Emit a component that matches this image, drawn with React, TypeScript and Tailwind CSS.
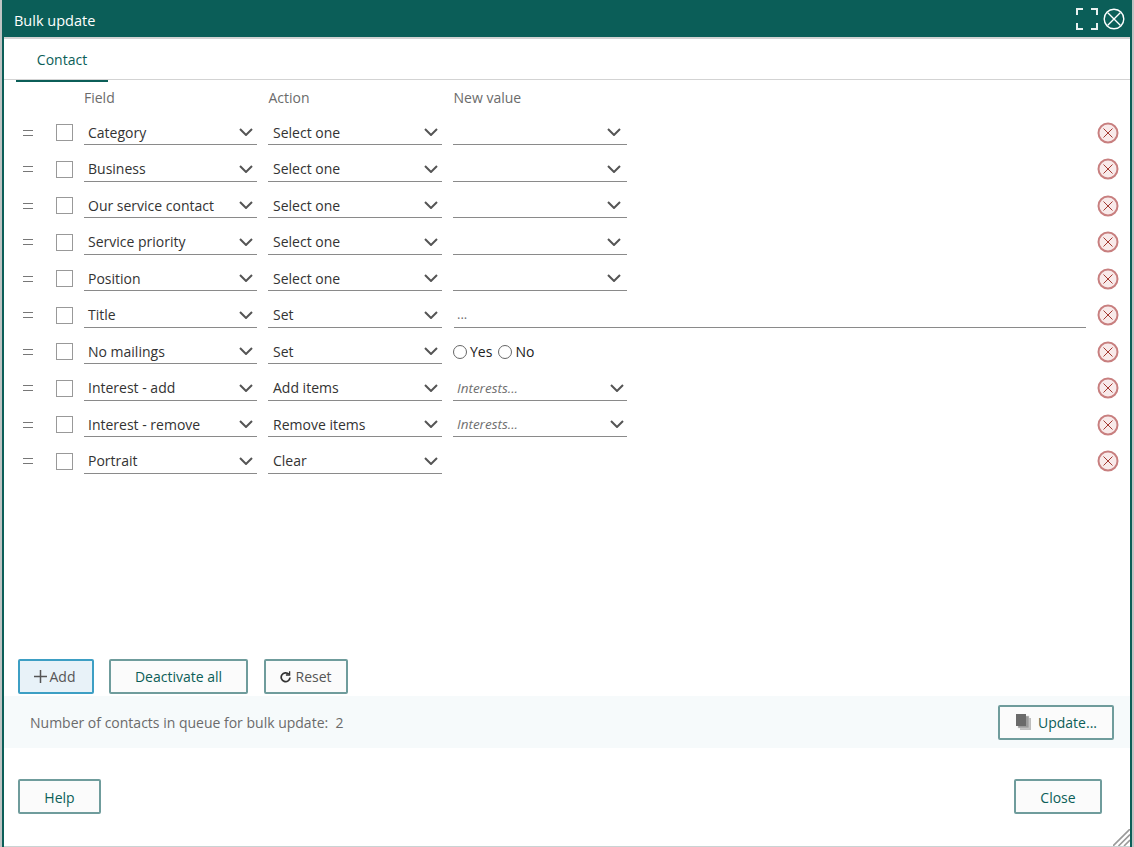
const rows = [
  { field: "Category", action: "Select one", kind: "select" },
  { field: "Business", action: "Select one", kind: "select" },
  { field: "Our service contact", action: "Select one", kind: "select" },
  { field: "Service priority", action: "Select one", kind: "select" },
  { field: "Position", action: "Select one", kind: "select" },
  { field: "Title", action: "Set", kind: "text" },
  { field: "No mailings", action: "Set", kind: "radio" },
  { field: "Interest - add", action: "Add items", kind: "interests" },
  { field: "Interest - remove", action: "Remove items", kind: "interests" },
  { field: "Portrait", action: "Clear", kind: "none" },
];

const btn =
  "h-[35px] flex items-center justify-center rounded-[2px] border-2 border-[#6f9c9c] bg-[#fbfbfb] text-[#0b5e58] text-[14px]";

function Chevron() {
  return (
    <svg width="14" height="8" viewBox="0 0 14 8" fill="none" stroke="#555" strokeWidth="2" className="shrink-0">
      <path d="M1 1l6 6 6-6" />
    </svg>
  );
}

function Select({ label, className = "", italic = false }: { label?: string; className?: string; italic?: boolean }) {
  return (
    <div className={`h-[25px] flex items-center justify-between border-b border-[#8a8a8a] ${className}`}>
      <span className={italic ? "italic text-[#707070] text-[13.5px]" : "text-[#333] text-[14px]"}>{label}</span>
      <Chevron />
    </div>
  );
}

function RemoveIcon() {
  return (
    <svg width="22" height="22" viewBox="0 0 22 22" className="block">
      <circle cx="11" cy="11" r="9.5" fill="#f8eaea" stroke="#c87f7f" strokeWidth="2" />
      <path d="M6.5 6.5l9 9M15.5 6.5l-9 9" stroke="#a33a32" strokeWidth="1" />
    </svg>
  );
}

function Radio({ label }: { label: string }) {
  return (
    <span className="flex items-center gap-[3px]">
      <span className="w-[14px] h-[14px] rounded-full border border-[#666] bg-white" />
      <span className="text-[14px] text-[#222]">{label}</span>
    </span>
  );
}

export default function App() {
  return (
    <div className="w-[1134px] h-[847px] px-[2px] bg-[#bfc4c4]" style={{ fontFamily: "'Open Sans', 'Noto Sans', sans-serif" }}>
      <div className="relative h-full flex flex-col bg-white border-x-2 border-[#0b5e58] overflow-hidden">
        {/* Title bar */}
        <div className="h-[37px] shrink-0 pl-[10px] pr-[5px] bg-[#0b5e58] flex items-center justify-between text-white">
          <span className="text-[14.5px] pt-[5px]">Bulk update</span>
          <div className="flex items-center gap-[5px]">
            <svg width="22" height="22" viewBox="0 0 22 22" fill="none" stroke="#e8f0ef" strokeWidth="2">
              <path d="M1 7V1h6M15 1h6v6M21 15v6h-6M7 21H1v-6" />
            </svg>
            <svg width="22" height="22" viewBox="0 0 22 22" fill="none" stroke="#fff" strokeWidth="1.4">
              <circle cx="11" cy="11" r="9.8" />
              <path d="M4.5 4.5l13 13M17.5 4.5l-13 13" />
            </svg>
          </div>
        </div>

        {/* Tabs */}
        <div className="h-[43px] shrink-0 border-t-2 border-b border-[#d3d3d3] px-[12px] flex items-end">
          <div className="w-[92px] h-[34px] border-b-2 border-[#0b5e58] -mb-[4px] flex items-start justify-center pt-[1px] text-[14px] text-[#0b5e58] relative top-[-1px]">
            Contact
          </div>
        </div>

        {/* Column headers */}
        <div className="h-[34.5px] shrink-0 flex items-center text-[14px] text-[#6b6b6b]">
          <span className="ml-[80px] w-[184.5px]">Field</span>
          <span className="w-[185px]">Action</span>
          <span>New value</span>
        </div>

        {/* Rows */}
        <div className="flex-1 flex flex-col">
          {rows.map((r) => (
            <div key={r.field} className="h-[36.5px] shrink-0 flex items-center">
              <span className="w-[52px] pl-[19px] flex">
                <span className="w-[10px] h-[6px] border-y border-[#777]" />
              </span>
              <span className="w-[17px] h-[17px] border border-[#999] bg-white" />
              <Select label={r.field} className="ml-[11px] w-[173px] pl-[4px] pr-[4px]" />
              <Select label={r.action} className="ml-[11px] w-[174px] pl-[5px] pr-[4px]" />
              <div className="ml-[11px] w-[633px]">
                {r.kind === "select" && <Select className="w-[174px] pl-[5px] pr-[6px]" />}
                {r.kind === "interests" && <Select label="Interests..." italic className="w-[174px] pl-[4px] pr-[3px]" />}
                {r.kind === "text" && (
                  <div className="h-[25px] ml-[1px] border-b border-[#8a8a8a] pl-[3px] text-[13px] text-[#707070] leading-[22px]">
                    ...
                  </div>
                )}
                {r.kind === "radio" && (
                  <div className="flex items-center gap-[6px]">
                    <Radio label="Yes" />
                    <Radio label="No" />
                  </div>
                )}
              </div>
              <span className="ml-[11px]">
                <RemoveIcon />
              </span>
            </div>
          ))}
        </div>

        {/* Actions */}
        <div className="shrink-0 flex items-center pl-[14px] mb-[2px]">
          <button className="h-[35px] w-[76px] flex items-center justify-center gap-[3px] pr-[3px] rounded-[2px] border-2 border-[#3d9fc4] bg-[#e8f2f8] text-[14px] text-[#555]">
            <svg width="13" height="13" viewBox="0 0 13 13" stroke="#555" strokeWidth="1.5">
              <path d="M6.5 0v13M0 6.5h13" />
            </svg>
            Add
          </button>
          <button className={`${btn} w-[139px] ml-[15px]`}>Deactivate all</button>
          <button className={`${btn} w-[84px] ml-[16px] gap-[4px] text-[#555]`}>
            <svg width="11" height="12" viewBox="0 0 11 12" fill="none" stroke="#333" strokeWidth="1.7">
              <path d="M8.8 3.2A4.4 4.4 0 1 0 10 6.5" />
              <path d="M9.6 0.2v3.8H5.9" strokeWidth="1.3" />
            </svg>
            Reset
          </button>
        </div>

        {/* Queue band */}
        <div className="h-[52px] shrink-0 bg-[#f6fafb] flex items-center justify-between pl-[26px] pr-[16px]">
          <span className="text-[14px] text-[#6b6b6b]">Number of contacts in queue for bulk update:&nbsp; 2</span>
          <button className={`${btn} w-[116px] gap-[6px]`}>
            <svg width="17" height="18" viewBox="0 0 17 18">
              <rect x="5" y="5" width="11" height="12" fill="#bdbdbd" />
              <rect x="3" y="3" width="11" height="12" fill="#9a9a9a" stroke="#d8d8d8" strokeWidth="0.5" />
              <rect x="1" y="1" width="10" height="12" fill="#6a6a6a" />
            </svg>
            Update...
          </button>
        </div>

        {/* Footer */}
        <div className="h-[99px] shrink-0 flex items-start justify-between pt-[31px] pl-[14px] pr-[28px] border-b border-[#c9d3d3]">
          <button className={`${btn} w-[83px]`}><span className="relative top-[1px]">Help</span></button>
          <button className={`${btn} w-[88px]`}><span className="relative top-[1px]">Close</span></button>
        </div>

        {/* Resize grip */}
        <svg width="17" height="17" viewBox="0 0 17 17" className="absolute right-0 bottom-[1px]" stroke="#9a9a9a" strokeWidth="1.6">
          <path d="M0 17L17 0M5.5 17L17 5.5M11 17l6-6" />
        </svg>
      </div>
    </div>
  );
}
